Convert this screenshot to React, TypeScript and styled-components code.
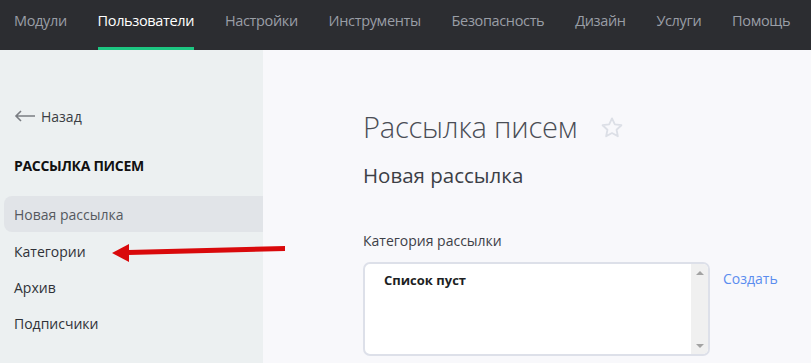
import { FC } from "react";
import styled, { createGlobalStyle } from "styled-components";

const GlobalStyle = createGlobalStyle`
  html, body {
    margin: 0;
    padding: 0;
    background: #f8f8fb;
    font-family: "Open Sans", "Noto Sans", sans-serif;
  }
  * { box-sizing: border-box; }
`;

const navItems = [
  "Модули",
  "Пользователи",
  "Настройки",
  "Инструменты",
  "Безопасность",
  "Дизайн",
  "Услуги",
  "Помощь",
];

const sideItems = ["Новая рассылка", "Категории", "Архив", "Подписчики"];

const App: FC = () => {
  return (
    <>
      <GlobalStyle />
      <Page>
        <TopBar>
          {navItems.map((item) => (
            <NavItem key={item} $active={item === "Пользователи"}>
              {item}
            </NavItem>
          ))}
        </TopBar>
        <Body>
          <Sidebar>
            <BackLink>
              <svg width="22" height="12" viewBox="0 0 22 12">
                <path
                  d="M21 6H2M7 1L2 6l5 5"
                  fill="none"
                  stroke="#7a7d82"
                  strokeWidth="1.6"
                />
              </svg>
              Назад
            </BackLink>
            <SectionTitle>РАССЫЛКА ПИСЕМ</SectionTitle>
            <SideMenu>
              {sideItems.map((item, i) => (
                <SideItem key={item} $active={i === 0}>
                  {item}
                </SideItem>
              ))}
            </SideMenu>
            {/* red pointer drawn over the menu */}
            <Annotation width="180" height="22" viewBox="0 0 180 22">
              <path d="M16 9 L173 5 L173 10 L16 14 Z" fill="#d9090b" />
              <path d="M0 12 L17 3 L17 21 Z" fill="#d9090b" />
            </Annotation>
          </Sidebar>
          <Content>
            <TitleRow>
              <PageTitle>Рассылка писем</PageTitle>
              <svg width="22" height="21" viewBox="0 0 24 23">
                <path
                  d="M12 1.5l3.1 6.6 7.2.9-5.3 5 1.4 7.1L12 17.6l-6.4 3.5L7 14l-5.3-5 7.2-.9z"
                  fill="none"
                  stroke="#dcdfe6"
                  strokeWidth="2"
                  strokeLinejoin="round"
                />
              </svg>
            </TitleRow>
            <SubTitle>Новая рассылка</SubTitle>
            <FieldLabel>Категория рассылки</FieldLabel>
            <FieldRow>
              <ListBox>
                <ListText>Список пуст</ListText>
                <ScrollTrack>
                  <ScrollArrow $up />
                  <ScrollArrow />
                </ScrollTrack>
              </ListBox>
              <CreateLink>Создать</CreateLink>
            </FieldRow>
          </Content>
        </Body>
      </Page>
    </>
  );
};

export default App;

const Page = styled.div`
  width: 811px;
  height: 363px;
  overflow: hidden;
  display: flex;
  flex-direction: column;
`;

const TopBar = styled.nav`
  height: 50px;
  background: #2c2d31;
  display: flex;
  align-items: stretch;
  padding-left: 14px;
  gap: 30.8px;
  flex-shrink: 0;
`;

const NavItem = styled.div<{ $active?: boolean }>`
  font-size: 14.5px;
  color: ${(p) => (p.$active ? "#ffffff" : "#9a9ea6")};
  display: flex;
  align-items: flex-start;
  padding-top: 11px;
  border-bottom: 3px solid ${(p) => (p.$active ? "#1dc682" : "transparent")};
  white-space: nowrap;
  letter-spacing: -0.35px;
`;

const Body = styled.div`
  flex: 1;
  display: flex;
`;

const Sidebar = styled.aside`
  position: relative;
  width: 263px;
  background: #ecf0f1;
  padding: 57px 0 0 4px;
  display: flex;
  flex-direction: column;
`;

const BackLink = styled.div`
  display: flex;
  align-items: center;
  gap: 5px;
  padding-left: 10px;
  font-size: 14px;
  color: #3a3d44;
  height: 18px;
`;

const SectionTitle = styled.h3`
  margin: 31px 0 0 10px;
  font-size: 14px;
  font-weight: 700;
  color: #111;
  height: 20px;
  line-height: 20px;
  letter-spacing: -0.3px;
`;

const SideMenu = styled.ul`
  list-style: none;
  margin: 20px 0 0;
  padding: 0;
`;

const SideItem = styled.li<{ $active?: boolean }>`
  height: 36px;
  display: flex;
  align-items: center;
  padding-left: 10px;
  font-size: 14px;
  color: ${(p) => (p.$active ? "#55595f" : "#2f3238")};
  background: ${(p) => (p.$active ? "#e1e4e8" : "transparent")};
  border-radius: 8px 0 0 8px;
  margin-bottom: ${(p) => (p.$active ? "1px" : "0")};
`;

const Annotation = styled.svg`
  position: absolute;
  left: 112px;
  top: 191px;
`;

const Content = styled.main`
  flex: 1;
  padding: 57px 0 0 100px;
  display: flex;
  flex-direction: column;
`;

const TitleRow = styled.div`
  display: flex;
  align-items: center;
  gap: 24px;
`;

const PageTitle = styled.h1`
  margin: 0;
  font-size: 29px;
  font-weight: 300;
  color: #4a4d55;
  line-height: 40px;
  letter-spacing: -0.2px;
`;

const SubTitle = styled.h2`
  margin: 14px 0 0;
  font-size: 20.5px;
  font-weight: 400;
  color: #3c3f46;
  line-height: 28px;
`;

const FieldLabel = styled.div`
  margin-top: 42px;
  font-size: 14px;
  color: #3d4047;
  line-height: 20px;
`;

const FieldRow = styled.div`
  margin-top: 11px;
  display: flex;
  align-items: flex-start;
  gap: 13px;
`;

const ListBox = styled.div`
  width: 347px;
  height: 94px;
  background: #fff;
  border: 2px solid #dde0e9;
  border-radius: 7px;
  display: flex;
  justify-content: space-between;
  overflow: hidden;
`;

const ListText = styled.div`
  padding: 7px 0 0 19px;
  font-size: 13px;
  font-weight: 700;
  color: #1d1f24;
`;

const ScrollTrack = styled.div`
  width: 17px;
  background: #f0f0f0;
  display: flex;
  flex-direction: column;
  justify-content: space-between;
  align-items: center;
  padding: 7px 0 6px;
`;

const ScrollArrow = styled.span<{ $up?: boolean }>`
  width: 0;
  height: 0;
  border-left: 4px solid transparent;
  border-right: 4px solid transparent;
  ${(p) =>
    p.$up
      ? "border-bottom: 4px solid #a3a3a3;"
      : "border-top: 4px solid #a3a3a3;"}
`;

const CreateLink = styled.a`
  margin-top: 7px;
  font-size: 14px;
  color: #5b8def;
  cursor: pointer;
`;
